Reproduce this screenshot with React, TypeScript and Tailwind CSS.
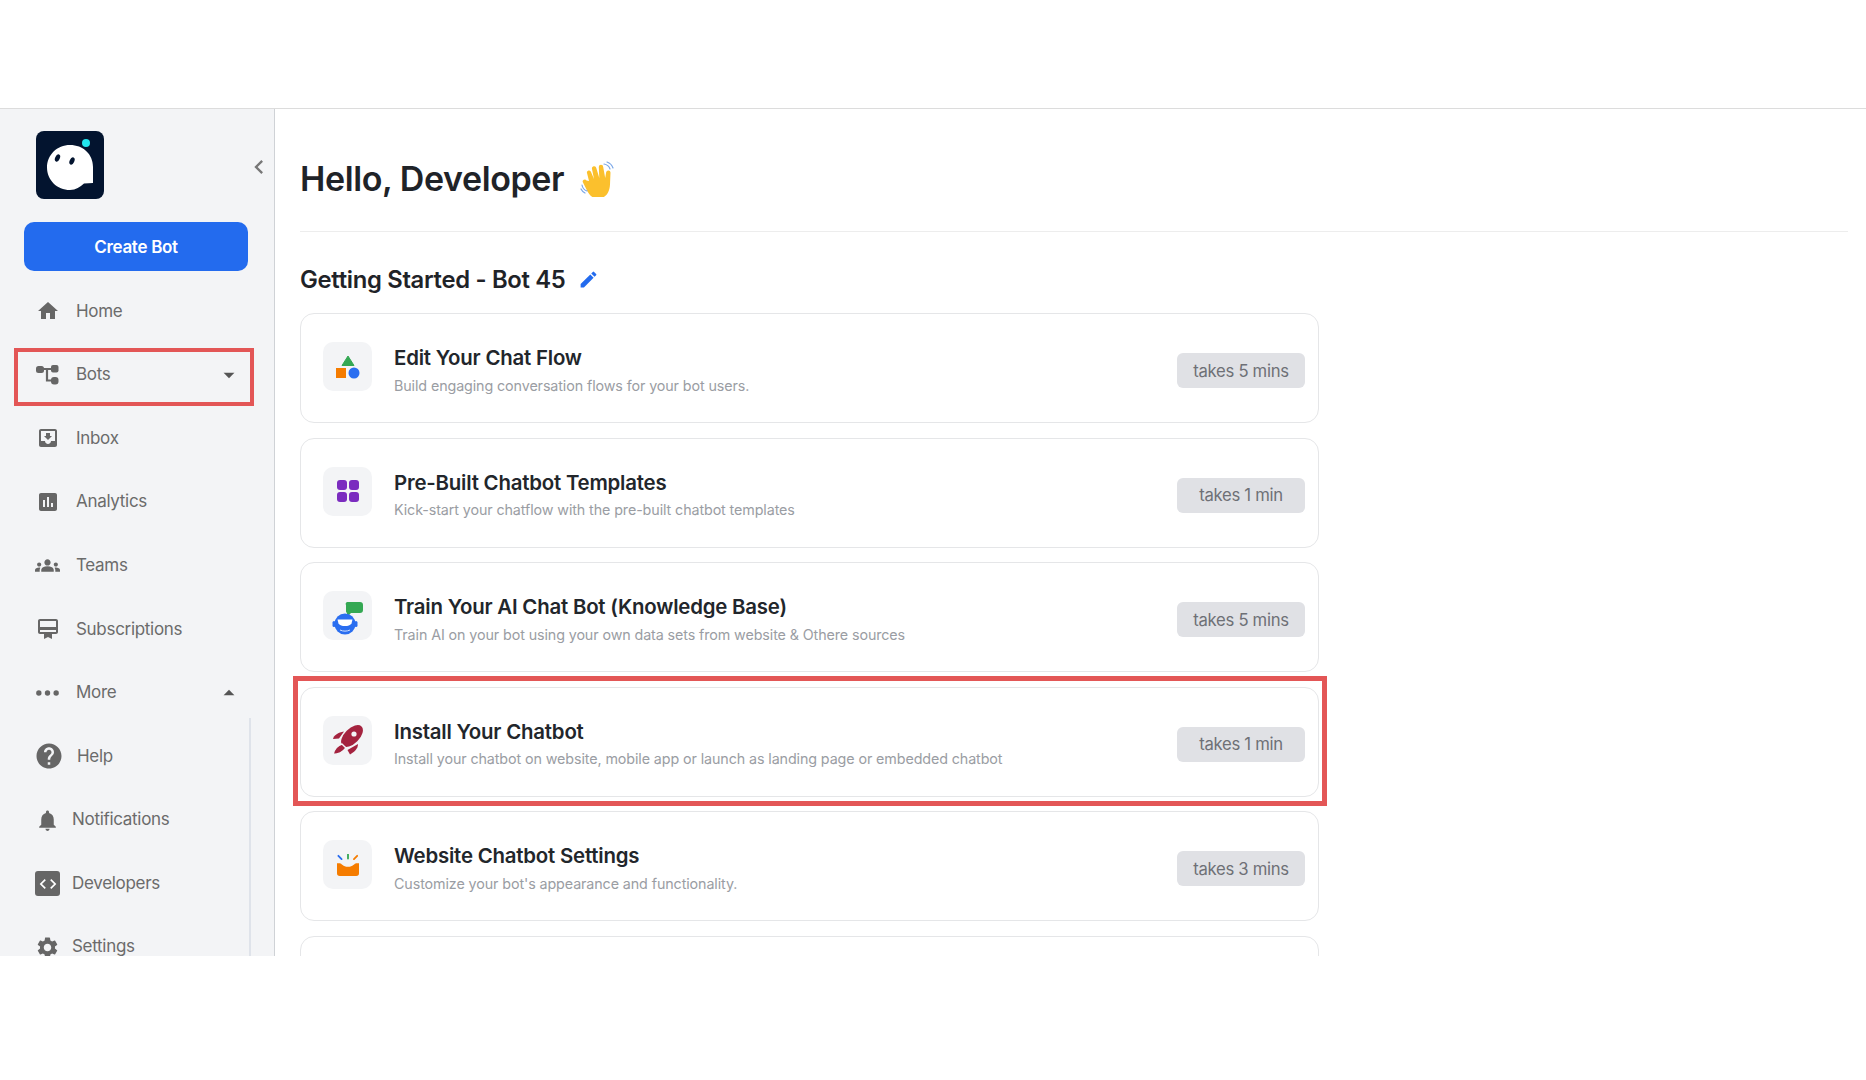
import { MdHome, MdMoveToInbox, MdAssessment, MdGroups, MdCardMembership, MdHelp, MdNotifications, MdCode, MdSettings, MdArrowDropDown, MdArrowDropUp, MdChevronLeft, MdEdit } from "react-icons/md";
import type { ReactNode } from "react";

const font = "font-['Inter','Noto_Sans',sans-serif]";

const BotsIcon = () => (
  <svg width="23" height="20" viewBox="0 0 23 20" fill="#666">
    <rect x="0" y="1" width="8" height="7" rx="2.5" />
    <rect x="15" y="0" width="7.500" height="7.500" rx="2" />
    <rect x="15" y="12" width="7.500" height="7.500" rx="3" />
    <path d="M6 4h10M11 4v11.500h5" fill="none" stroke="#666" strokeWidth="2.200" />
  </svg>
);

const DotsIcon = () => (
  <svg width="26" height="8" viewBox="0 0 26 8" fill="#666">
    <circle cx="4" cy="4" r="2.800" />
    <circle cx="13" cy="4" r="2.800" />
    <circle cx="22" cy="4" r="2.800" />
  </svg>
);

const DevIcon = () => (
  <div className="flex h-[25px] w-[25px] items-center justify-center rounded-[3px] bg-[#666]">
    <MdCode className="text-[20px] text-white" />
  </div>
);

const navTop = [
  { label: "Home", icon: <MdHome className="text-[24px] text-[#666]" /> },
  { label: "Bots", icon: <BotsIcon />, caret: "down" },
  { label: "Inbox", icon: <MdMoveToInbox className="text-[24px] text-[#666]" /> },
  { label: "Analytics", icon: <MdAssessment className="text-[24px] text-[#666]" /> },
  { label: "Teams", icon: <MdGroups className="text-[27px] text-[#666]" /> },
  { label: "Subscriptions", icon: <MdCardMembership className="text-[24px] text-[#666]" /> },
  { label: "More", icon: <DotsIcon />, caret: "up" },
];

const navBottom = [
  { label: "Help", icon: <MdHelp className="ml-[2px] shrink-0 text-[30px] text-[#666]" />, pad: "w-[77px] pl-[35px]" },
  { label: "Notifications", icon: <MdNotifications className="text-[25px] text-[#666]" />, pad: "w-[72px] pl-[35px]" },
  { label: "Developers", icon: <DevIcon />, pad: "w-[72px] pl-[35px]" },
  { label: "Settings", icon: <MdSettings className="text-[25px] text-[#666]" />, pad: "w-[72px] pl-[35px]" },
];

const NavRow = ({ label, icon, caret, pad = "w-[76px] pl-[35px]" }: { label: string; icon: ReactNode; caret?: string; pad?: string }) => (
  <div className="flex h-[63.6px] shrink-0 items-center">
    <div className={`flex shrink-0 items-center ${pad}`}>
      <div className="flex w-[25px] items-center justify-center">{icon}</div>
    </div>
    <span className="text-[17px] tracking-[-0.3px] text-[#6b6b6b]">{label}</span>
    {caret === "down" && <MdArrowDropDown className="ml-auto mr-[32px] text-[26px] text-[#555]" />}
    {caret === "up" && <MdArrowDropUp className="ml-auto mr-[32px] text-[26px] text-[#555]" />}
  </div>
);

const ShapesIcon = () => (
  <svg width="26" height="26" viewBox="0 0 26 26">
    <path d="M13 2 L19 11.500 H7 Z" fill="#34a853" stroke="#34a853" strokeLinejoin="round" />
    <rect x="1" y="14" width="10" height="10" fill="#f57c00" />
    <circle cx="19" cy="19" r="5.500" fill="#2a6ef0" />
  </svg>
);

const GridIcon = () => (
  <svg width="24" height="24" viewBox="0 0 24 24" fill="#7b2cbf">
    <rect x="1" y="1" width="10" height="10" rx="3" />
    <rect x="13" y="1" width="10" height="10" rx="3" />
    <rect x="1" y="13" width="10" height="10" rx="3" />
    <rect x="13" y="13" width="10" height="10" rx="3" />
  </svg>
);

const RobotIcon = () => (
  <svg className="mt-[7px]" width="32" height="34" viewBox="0 0 32 34">
    <path d="M16 0h12a3 3 0 0 1 3 3v5a3 3 0 0 1-3 3H19l-4 4v-4a2 2 0 0 1-1-2V3a2 2 0 0 1 2-3z" fill="#34a853" />
    <circle cx="13" cy="22" r="10.500" fill="#2a6ef0" />
    <rect x="0.500" y="19" width="3" height="6" rx="1.500" fill="#2a6ef0" />
    <rect x="22.500" y="19" width="3" height="6" rx="1.500" fill="#2a6ef0" />
    <path d="M5.500 17.500h15l-1 4c-1.500 2-3.500 2.500-6.500 2.500s-5-.5-6.500-2.500z" fill="#fff" />
    <path d="M8 28c3 1.500 7 1.500 10 0" fill="none" stroke="#cfe0ff" strokeWidth="1" />
  </svg>
);

const RocketIcon = () => (
  <svg width="30" height="30" viewBox="0 0 30 30" fill="#a4233f">
    <ellipse cx="19" cy="11" rx="13.500" ry="7.500" transform="rotate(-45 19 11)" />
    <circle cx="21" cy="9" r="2.600" fill="#f3f4f6" />
    <path d="M0 14C1 10 5 7.500 11 6.500L6 13.500z" />
    <path d="M25 19C25 24 21 27 17 29.500L14.500 25z" />
    <path d="M9 19C5 20 1 24 0 29.500C5 29.500 10 27 13 23z" stroke="#f3f4f6" strokeWidth="1.500" />
  </svg>
);

const BoxIcon = () => (
  <svg width="24" height="22" viewBox="0 0 26 24">
    <path d="M2.500 2 L6 5.500" stroke="#2a6ef0" strokeWidth="2" strokeLinecap="round" />
    <path d="M13 0.500 V5" stroke="#34a853" strokeWidth="2" strokeLinecap="round" />
    <path d="M23 2 L19.500 5.500" stroke="#f57c00" strokeWidth="2" strokeLinecap="round" />
    <path d="M1 10h3c2 0 3.500 4 9 4s7-4 9-4h3v11a3 3 0 0 1-3 3H4a3 3 0 0 1-3-3z" fill="#f57c00" />
  </svg>
);

const HandIcon = () => (
  <svg width="36" height="36" viewBox="0 0 36 36">
    <path d="M9 20 L7 12 a2 2 0 0 1 4-1 l3 7 -2-10 a2.200 2.200 0 0 1 4.300-1 l3 10 -.5-11 a2.200 2.200 0 0 1 4.400 0 l2 11 1-6 a2.200 2.200 0 0 1 4.300 .5 l-.5 12 c-.5 9-5 14-12 14 c-6 0-9-4-11-8 l-4-8 a2 2 0 0 1 3.500-2z" fill="#fbc02d" />
    <path d="M24 3c3 .5 5 2 6 5M27 1c3 1 5 3 6 6M2 24c.5 3 2 5 5 6M1 28c1 2 2 3 4 4" fill="none" stroke="#7aa7e8" strokeWidth="1.200" strokeLinecap="round" />
  </svg>
);

const steps = [
  { title: "Edit Your Chat Flow", desc: "Build engaging conversation flows for your bot users.", time: "takes 5 mins", icon: <ShapesIcon /> },
  { title: "Pre-Built Chatbot Templates", desc: "Kick-start your chatflow with the pre-built chatbot templates", time: "takes 1 min", icon: <GridIcon /> },
  { title: "Train Your AI Chat Bot (Knowledge Base)", desc: "Train AI on your bot using your own data sets from website & Othere sources", time: "takes 5 mins", icon: <RobotIcon /> },
  { title: "Install Your Chatbot", desc: "Install your chatbot on website, mobile app or launch as landing page or embedded chatbot", time: "takes 1 min", icon: <RocketIcon /> },
  { title: "Website Chatbot Settings", desc: "Customize your bot's appearance and functionality.", time: "takes 3 mins", icon: <BoxIcon /> },
];

const App = () => {
  return (
    <div className={`relative h-[1080px] w-full overflow-hidden bg-white ${font}`}>
      <div className="h-[109px] border-b border-[#dcdcdc]" />
      <div className="flex h-[847px] overflow-hidden">
        <aside className="relative flex w-[275px] shrink-0 flex-col overflow-hidden border-r border-[#cfd2d6] bg-[#f3f4f6]">
          <div className="ml-[36px] mt-[22px] h-[68px] w-[68px] shrink-0">
            <svg width="68" height="68" viewBox="0 0 68 68">
              <rect width="68" height="68" rx="8" fill="#03142f" />
              <path d="M34 14c13 0 23 9 23 22v16l-9 .5C44 56 40 59 34 59 21 59 11 49 11 36.500S21 14 34 14z" fill="#fff" />
              <ellipse cx="21.500" cy="27" rx="2.300" ry="3.800" transform="rotate(25 21.500 27)" fill="#03142f" />
              <ellipse cx="36" cy="30" rx="2.300" ry="3.800" transform="rotate(25 36 30)" fill="#03142f" />
              <circle cx="50" cy="12" r="4" fill="#22e6ee" />
            </svg>
          </div>
          <MdChevronLeft className="absolute left-[245px] top-[44px] text-[28px] text-[#777]" />
          <button className="ml-[24px] mt-[23px] h-[49px] w-[224px] shrink-0 rounded-[10px] bg-[#236bee] pt-[2px] text-[17px] font-semibold tracking-[-0.3px] text-white">
            Create Bot
          </button>
          <nav className="mt-[8.500px] flex flex-col">
            {navTop.map((item) => (
              <NavRow key={item.label} {...item} />
            ))}
            <div className="mr-[23px] mt-[-7px] border-r-2 border-[#dfe3ea] pt-[7px]">
              {navBottom.map((item) => (
                <NavRow key={item.label} {...item} />
              ))}
            </div>
          </nav>
        </aside>
        <main className="flex-1 overflow-hidden pl-[25px] pr-[18px]">
          <div className="flex h-[123px] items-center gap-[16px] border-b border-[#ededed] pt-[17px]">
            <h1 className="text-[34px] font-semibold tracking-[-0.4px] text-[#1f2328]">Hello, Developer</h1>
            <HandIcon />
          </div>
          <div className="flex h-[81px] items-center gap-[12px] pt-[14px]">
            <h2 className="text-[23.800px] font-semibold tracking-[-0.3px] text-[#1f2328]">Getting Started - Bot 45</h2>
            <MdEdit className="text-[21px] text-[#236bee]" />
          </div>
          <div className="flex w-[1019px] flex-col gap-[14.500px]">
            {steps.map((step) => (
              <div key={step.title} className="flex h-[110px] shrink-0 items-center rounded-[14px] border border-[#e5e6e8] bg-white pl-[22px] pr-[13px]">
                <div className="mb-[3px] flex h-[49px] w-[49px] shrink-0 items-center justify-center rounded-[10px] bg-[#f3f4f6]">{step.icon}</div>
                <div className="ml-[22px] mt-[4.500px] flex flex-col gap-[6.500px]">
                  <span className="text-[20.400px] font-semibold leading-[24px] tracking-[-0.2px] text-[#22262b]">{step.title}</span>
                  <span className="text-[14.300px] leading-[18px] tracking-[-0.1px] text-[#9a9da3]">{step.desc}</span>
                </div>
                <div className="ml-auto mt-[5px] flex h-[35px] w-[128px] items-center justify-center rounded-[6px] bg-[#e0e1e5] pt-[2px] text-[16.700px] tracking-[-0.3px] text-[#6e7076]">
                  {step.time}
                </div>
              </div>
            ))}
            <div className="h-[110px] shrink-0 rounded-[14px] border border-[#e5e6e8]" />
          </div>
        </main>
      </div>
      {/* red highlight boxes sit over the screenshot */}
      <div className="absolute left-[14px] top-[348px] h-[58px] w-[240px] border-[4.500px] border-[#e35656]" />
      <div className="absolute left-[293px] top-[676px] h-[130px] w-[1034px] border-[5px] border-[#e35656]" />
    </div>
  );
};

export default App;
